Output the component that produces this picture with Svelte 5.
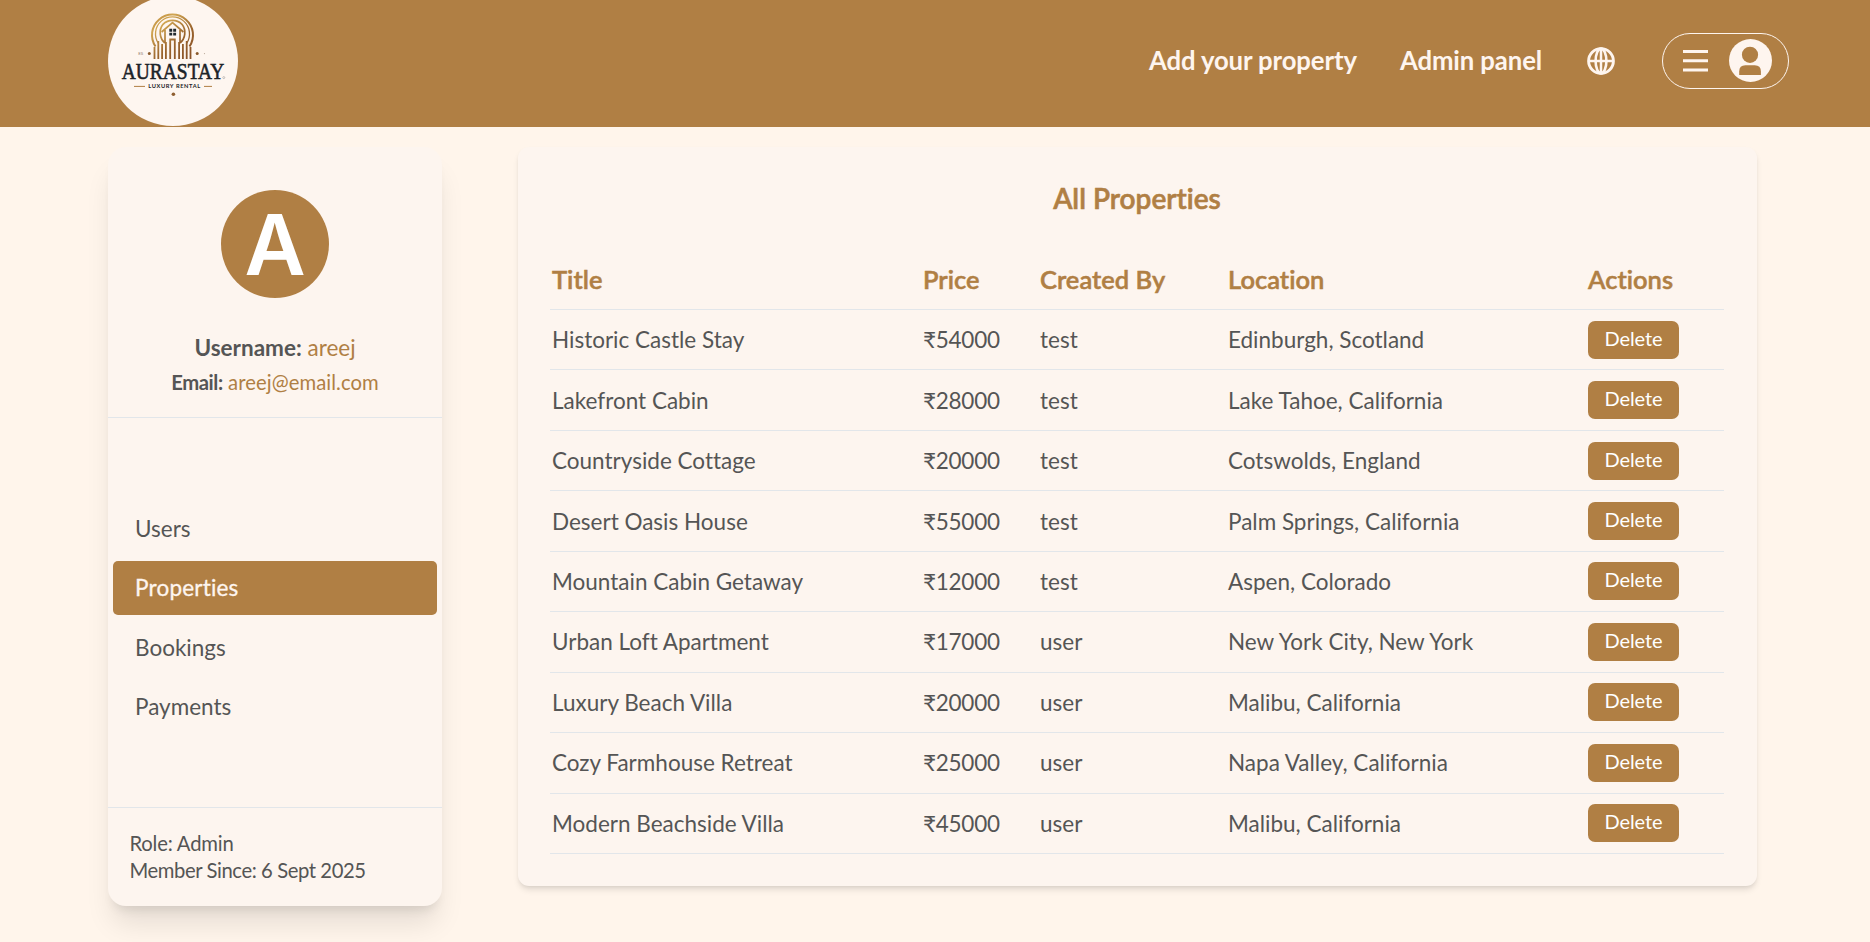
<script>
  const menu = ['Users', 'Properties', 'Bookings', 'Payments'];
  const active = 'Properties';
  const properties = [
    ['Historic Castle Stay', '54000', 'test', 'Edinburgh, Scotland'],
    ['Lakefront Cabin', '28000', 'test', 'Lake Tahoe, California'],
    ['Countryside Cottage', '20000', 'test', 'Cotswolds, England'],
    ['Desert Oasis House', '55000', 'test', 'Palm Springs, California'],
    ['Mountain Cabin Getaway', '12000', 'test', 'Aspen, Colorado'],
    ['Urban Loft Apartment', '17000', 'user', 'New York City, New York'],
    ['Luxury Beach Villa', '20000', 'user', 'Malibu, California'],
    ['Cozy Farmhouse Retreat', '25000', 'user', 'Napa Valley, California'],
    ['Modern Beachside Villa', '45000', 'user', 'Malibu, California']
  ];
</script>

<header>
  <svg class="logo" viewBox="0 0 130 130" width="130" height="130">
    <defs>
      <linearGradient id="gold" x1="40" y1="16" x2="80" y2="64" gradientUnits="userSpaceOnUse">
        <stop offset="0" stop-color="#b98438" />
        <stop offset="0.3" stop-color="#d0a552" />
        <stop offset="0.65" stop-color="#9a642d" />
        <stop offset="1" stop-color="#8a5329" />
      </linearGradient>
    </defs>
    <circle cx="65" cy="65" r="65" fill="#fef6f0" />
    <g fill="none" stroke="url(#gold)">
      <path d="M47.5 50.5A20.5 20.5 0 1 1 81.5 50.5" stroke-width="2" />
      <path d="M50.5 47.5A17 17 0 1 1 78.5 47.5" stroke-width="1.3" />
      <path d="M57 47A13.6 13.6 0 0 1 55 28.3A13.6 13.6 0 0 1 74 28.3A13.6 13.6 0 0 1 72 47" stroke-width="1.7" />
      <path d="M53.6 36L64.5 26.6L75.4 36M57 34V46M72 34V46" stroke-width="1.7" />
      <path d="M46.5 51V63M50.3 45V63M54.1 48V63M57.9 46V63M62.2 63V43.5H66.8V63M71.1 46V63M74.9 48V63M78.7 45V63M82.5 51V63" stroke-width="1.8" />
    </g>
    <path d="M61.3 32.8h2.9v2.9h-2.9zM65.2 32.8h2.9v2.9h-2.9zM61.3 36.7h2.9v2.9h-2.9zM65.2 36.7h2.9v2.9h-2.9z" fill="#222a2e" />
    <circle cx="41.3" cy="57.4" r="1.5" fill="#8a5a2c" />
    <circle cx="89.2" cy="57.4" r="1.5" fill="#8a5a2c" />
    <circle cx="96.5" cy="57.6" r="0.6" fill="#b9a89a" />
    <text x="30.2" y="59" font-size="4.4" fill="#8d7b6d" font-family="Lato, sans-serif">ES</text>
    <text x="13.8" y="83.2" font-size="23.5" textLength="102.5" lengthAdjust="spacingAndGlyphs" fill="#1c2328" stroke="#1c2328" stroke-width="0.6" font-family="'Liberation Serif', serif">AURASTAY</text>
    <text x="40.2" y="91.8" font-size="5.7" textLength="52" font-weight="700" fill="#1c2328" font-family="Lato, sans-serif">LUXURY RENTAL</text>
    <path d="M26 90.4H37M96 90.4H104" stroke="#b07f44" stroke-width="1" />
    <circle cx="65.4" cy="98.3" r="1.8" fill="#8f5f31" />
    <circle cx="115.8" cy="81.6" r="1" fill="none" stroke="#777" stroke-width="0.4" />
  </svg>
  <nav>
    <a class="add">Add your property</a>
    <a class="admin">Admin panel</a>
    <svg class="globe" viewBox="0 0 28 28" width="28" height="28" fill="none" stroke="#fef5ef">
      <circle cx="14" cy="14" r="12.4" stroke-width="2.9" />
      <ellipse cx="14" cy="14" rx="5.4" ry="12.4" stroke-width="2.6" />
      <path d="M14 1.5V26.5M1.5 14H26.5" stroke-width="2.5" />
    </svg>
    <div class="pill">
      <svg viewBox="0 0 25 22" width="25" height="22" fill="#fef5ef">
        <path d="M0 0h25v3H0zM0 9.2h25v3H0zM0 18.6h25v3H0z" />
      </svg>
      <svg class="face" viewBox="0 0 43 43" width="43" height="43">
        <circle cx="21.5" cy="21.5" r="21.5" fill="#fef5ef" />
        <circle cx="21" cy="15.8" r="8.1" fill="#b07f44" />
        <path d="M10.2 36V32.5Q10.2 26.3 16.4 26.3H25.7Q31.9 26.3 31.9 32.5V36Z" fill="#b07f44" />
      </svg>
    </div>
  </nav>
</header>

<main>
  <aside>
    <section class="profile">
      <div class="avatar">A</div>
      <p class="user"><b>Username:</b> <span>areej</span></p>
      <p class="email"><b>Email:</b> <span>areej@email.com</span></p>
    </section>
    <ul>
      {#each menu as item}
        <li class:active={item === active}>{item}</li>
      {/each}
    </ul>
    <footer>
      <p>Role: Admin</p>
      <p class="since">Member Since: 6 Sept 2025</p>
    </footer>
  </aside>

  <section class="panel">
    <h2>All Properties</h2>
    <table>
      <colgroup>
        <col class="c1" /><col class="c2" /><col class="c3" /><col class="c4" /><col />
      </colgroup>
      <thead>
        <tr><th>Title</th><th>Price</th><th>Created By</th><th>Location</th><th>Actions</th></tr>
      </thead>
      <tbody>
        {#each properties as [title, price, owner, place]}
          <tr>
            <td>{title}</td>
            <td class="price">₹{price}</td>
            <td>{owner}</td>
            <td>{place}</td>
            <td><button>Delete</button></td>
          </tr>
        {/each}
      </tbody>
    </table>
  </section>
</main>

<style>
  :global(body) {
    margin: 0;
    background: #fff5eb;
    color: #555;
    font-family: Lato, sans-serif;
    font-variant-ligatures: none;
  }
  p, h2, ul { margin: 0; padding: 0; }
  header {
    height: 127px;
    box-sizing: border-box;
    background: #b07f44;
    padding: 0 81px 0 108px;
    display: flex;
    justify-content: space-between;
    align-items: flex-start;
  }
  .logo { display: block; margin-top: -4px; flex: none; }
  nav { display: flex; align-items: center; height: 122px; }
  nav a {
    color: #fef5ef;
    font-size: 25.7px;
    font-weight: 700;
    letter-spacing: -0.1px;
    white-space: nowrap;
    padding-bottom: 2px;
  }
  .add { width: 251px; }
  .admin { width: 187px; }
  .globe { margin-right: 47px; }
  .face { margin-top: -1px; }
  .pill {
    width: 127px;
    height: 56px;
    box-sizing: border-box;
    border: 1.4px solid #fef5ef;
    border-radius: 28px;
    display: flex;
    align-items: center;
    justify-content: space-between;
    padding: 0 16px 0 20px;
  }
  main {
    display: flex;
    align-items: flex-start;
    gap: 76px;
    box-sizing: border-box;
    height: 815px;
    padding: 20px 0 0 108px;
    overflow: hidden;
  }
  aside {
    width: 334px;
    height: 759px;
    display: flex;
    flex-direction: column;
    background: #fdf5ef;
    border-radius: 18px;
    box-shadow: 0 22.5px 28px -5.6px rgba(0, 0, 0, 0.1), 0 9px 11px -6.8px rgba(0, 0, 0, 0.1);
  }
  .profile {
    height: 271px;
    box-sizing: border-box;
    padding-top: 43px;
    border-bottom: 1px solid #e2e6ea;
    text-align: center;
  }
  .avatar {
    width: 108px;
    height: 108px;
    margin: 0 auto 36px;
    border-radius: 50%;
    background: #b07f44;
    color: #fff;
    font: 600 84px/109px Inter, sans-serif;
  }
  .profile span { color: #b07f44; }
  .user { font-size: 22.5px; line-height: 27px; }
  .email { font-size: 20.25px; line-height: 27px; margin-top: 8px; }
  .email b { letter-spacing: -0.4px; }
  .email span { letter-spacing: 0.08px; }
  ul {
    list-style: none;
    flex: 1;
    display: flex;
    flex-direction: column;
    justify-content: center;
    gap: 5.6px;
    padding: 11px 5px 0;
  }
  li {
    font-size: 22.5px;
    line-height: 54px;
    padding-left: 22px;
    border-radius: 5px;
  }
  li.active {
    background: #b07f44;
    color: #fef5ef;
    letter-spacing: 0.2px;
    -webkit-text-stroke: 0.3px #fef5ef;
  }
  footer {
    height: 99px;
    box-sizing: border-box;
    border-top: 1px solid #e2e6ea;
    padding: 22px 21.5px 0;
    font-size: 20.25px;
    line-height: 27px;
    letter-spacing: -0.2px;
  }
  .since { letter-spacing: -0.42px; white-space: nowrap; }
  .panel {
    width: 1239px;
    height: 739px;
    flex: none;
    box-sizing: border-box;
    padding: 34px 33px 0 32px;
    background: #fdf5ef;
    border-radius: 11px;
    box-shadow: 0 4.5px 6.8px -1.1px rgba(0, 0, 0, 0.1), 0 2.3px 4.5px -2.3px rgba(0, 0, 0, 0.1);
  }
  h2 {
    color: #b07f44;
    font-size: 28px;
    font-weight: 600;
    line-height: 34px;
    text-align: center;
    -webkit-text-stroke: 0.6px #b07f44;
  }
  table {
    width: 100%;
    margin-top: 33px;
    table-layout: fixed;
    border-collapse: separate;
    border-spacing: 0;
  }
  .c1 { width: 371px; }
  .c2 { width: 117px; }
  .c3 { width: 188px; }
  .c4 { width: 360px; }
  th, td {
    padding: 0 2px;
    text-align: left;
    border-bottom: 1px solid #e2e6ea;
    white-space: nowrap;
    box-sizing: border-box;
  }
  th {
    height: 62px;
    color: #b07f44;
    font-size: 25.5px;
    font-weight: 600;
    vertical-align: middle;
    padding-top: 1px;
    -webkit-text-stroke: 0.5px #b07f44;
  }
  td { height: 60.45px; font-size: 22.5px; vertical-align: middle; }
  .price { letter-spacing: -0.25px; }
  button {
    display: block;
    width: 91px;
    height: 38px;
    border: 0;
    border-radius: 7px;
    padding: 0 0 3px;
    background: #b07f44;
    color: #fff;
    font: 20px/35px Lato, sans-serif;
    letter-spacing: -0.1px;
  }
</style>
